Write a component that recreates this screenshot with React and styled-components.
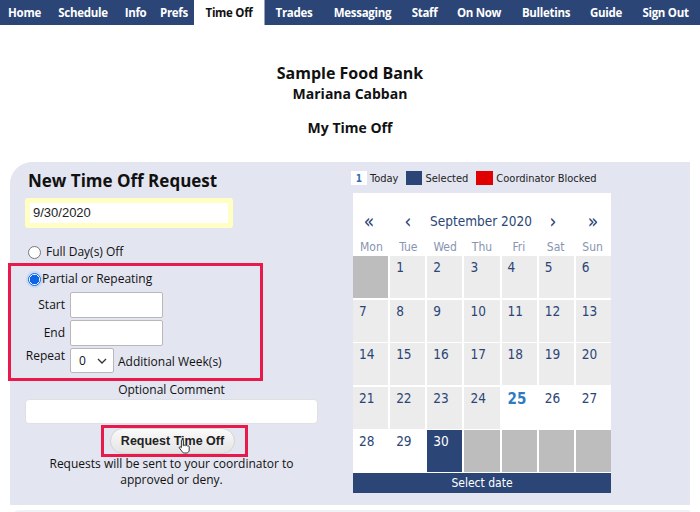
import styled, { createGlobalStyle, css } from "styled-components";

const GlobalStyle = createGlobalStyle`
  html, body { margin: 0; padding: 0; background: #ffffff; }
  body { font-family: "Open Sans", "Noto Sans", sans-serif; color: #111; }
  * { box-sizing: border-box; }
`;

const NAVY = "#2b4577";

// Navigation
const NavBar = styled.nav`
  display: flex;
  height: 25px;
  background: ${NAVY};
`;

const Tab = styled.div`
  width: ${(p) => p.w}px;
  display: flex;
  align-items: center;
  justify-content: center;
  font-size: 11.5px;
  letter-spacing: -0.3px;
  font-weight: 700;
  color: #ffffff;
  ${(p) =>
    p.active &&
    css`
      background: #ffffff;
      color: #111111;
      border-right: 1px solid #9aa3b5;
    `}
`;

// Page heading
const Header = styled.header`
  display: flex;
  flex-direction: column;
  align-items: center;
  padding-top: 38px;
  font-weight: 700;
`;

const Org = styled.div`
  font-size: 16px;
  line-height: 21px;
`;

const Person = styled.div`
  font-size: 14px;
  line-height: 20px;
`;

const PageTitle = styled.div`
  font-size: 14px;
  line-height: 20px;
  margin-top: 14px;
`;

// Main panel
const Panel = styled.section`
  margin: 24px 10px 0 10px;
  height: 343px;
  background: #e3e5f0;
  border-top-left-radius: 22px;
  display: flex;
`;

const FormCol = styled.div`
  width: 331px;
  padding-left: 15px;
  display: flex;
  flex-direction: column;
  font-size: 12px;
`;

const FormTitle = styled.h2`
  margin: 7px 0 0 3px;
  font-size: 17px;
  line-height: 24px;
  font-weight: 700;
`;

const DateBox = styled.div`
  margin-top: 5px;
  width: 208px;
  padding: 5px;
  background: #ffffc4;
  border-radius: 3px;
`;

const DateInput = styled.div`
  height: 20px;
  background: #ffffff;
  font-family: "Liberation Sans", Arial, sans-serif;
  font-size: 13px;
  line-height: 20px;
  padding-left: 3px;
  color: #222;
`;

const RadioRow = styled.label`
  display: flex;
  align-items: center;
  gap: ${(p) => (p.tight ? 1 : 5)}px;
  line-height: 16px;
  margin-top: ${(p) => p.mt || 0}px;
  margin-left: ${(p) => p.ml ?? 3}px;
`;

const Radio = styled.span`
  width: 13px;
  height: 13px;
  border-radius: 50%;
  border: 1px solid #767676;
  background: #ffffff;
  ${(p) =>
    p.checked &&
    css`
      border: 1px solid #0a66e6;
      background: radial-gradient(circle, #0a66e6 0 4.5px, #ffffff 4.6px);
      box-shadow: 0 0 0 2px #c8d8f6;
    `}
`;

const Highlight = styled.div`
  border: 3px solid #e8194b;
  ${(p) =>
    p.form &&
    css`
      margin: 3px 0 0 -17px;
      width: 255px;
      height: 118px;
      padding: 5px 0 0 17px;
    `}
`;

const FieldRow = styled.div`
  display: flex;
  align-items: ${(p) => (p.top ? "flex-start" : "center")};
  margin-top: ${(p) => p.mt || 0}px;
`;

const FieldLabel = styled.span`
  width: 45px;
  text-align: right;
  padding-right: 5px;
  margin-left: -3px;
  line-height: 16px;
`;

const TimeInput = styled.div`
  width: 93px;
  height: 26px;
  background: #ffffff;
  border: 1px solid #b8b8b8;
  border-radius: 2px;
`;

const Select = styled.div`
  width: 44px;
  height: 25px;
  background: #ffffff;
  border: 1px solid #b8b8b8;
  border-radius: 2px;
  display: flex;
  align-items: center;
  justify-content: space-between;
  padding: 0 6px 0 8px;
`;

const SelectNote = styled.span`
  margin-left: 4px;
  margin-top: 6px;
  line-height: 16px;
`;

const CommentLabel = styled.div`
  margin-top: 1px;
  text-align: center;
  width: 293px;
  line-height: 16px;
`;

const CommentInput = styled.div`
  margin-top: 1px;
  width: 293px;
  height: 25px;
  background: #ffffff;
  border: 1px solid #e0e0e0;
  border-radius: 4px;
`;

const ButtonWrap = styled(Highlight)`
  position: relative;
  align-self: flex-start;
  margin: 1px 0 0 76px;
  padding: 0 10px 0 6px;
`;

const SubmitButton = styled.button`
  display: block;
  width: 125px;
  height: 26px;
  border: 1px solid #d5d5d5;
  border-radius: 13px;
  background: linear-gradient(#fafafa, #e4e4e4);
  font-family: "Liberation Sans", Arial, sans-serif;
  font-weight: 700;
  font-size: 12.5px;
  color: #222;
  padding: 0;
`;

const Cursor = styled.svg`
  position: absolute;
  left: 74px;
  top: 10px;
`;

const Note = styled.p`
  margin: -1px 0 0 0;
  width: 293px;
  text-align: center;
  line-height: 16px;
`;

// Calendar column
const CalCol = styled.div`
  padding-left: 10px;
  display: flex;
  flex-direction: column;
  font-family: "DejaVu Sans Condensed", "DejaVu Sans", sans-serif;
`;

const Legend = styled.div`
  display: flex;
  align-items: center;
  margin-top: 9px;
  height: 14px;
  font-size: 11px;
  color: #222;
`;

const Swatch = styled.span`
  width: ${(p) => p.w || 16}px;
  height: 14px;
  background: ${(p) => p.bg};
  color: #2e6fb0;
  font-size: 10px;
  font-weight: 700;
  display: flex;
  align-items: center;
  justify-content: center;
  margin-right: 3px;
  margin-left: ${(p) => p.ml || 0}px;
`;

const Calendar = styled.div`
  margin-top: 8px;
  margin-left: 2px;
  width: 258px;
  background: #ffffff;
  display: flex;
  flex-direction: column;
`;

const MonthNav = styled.div`
  display: grid;
  grid-template-columns: 32px 46px 100px 44px 36px;
  align-items: center;
  margin-top: 17px;
  height: 22px;
  color: #2b4577;
`;

const NavArrow = styled.span`
  text-align: center;
  font-size: 19px;
  line-height: 22px;
`;

const MonthTitle = styled.span`
  display: flex;
  justify-content: center;
  white-space: nowrap;
  font-size: 13.5px;
`;

const Weekdays = styled.div`
  display: grid;
  grid-template-columns: repeat(7, 1fr);
  margin-top: 6px;
  height: 17px;
  align-items: center;
  color: #8894b0;
  font-size: 12px;
  text-align: center;
`;

const DayGrid = styled.div`
  display: grid;
  grid-template-columns: repeat(7, 1fr);
  grid-auto-rows: 42px;
  column-gap: 2px;
  row-gap: 1.5px;
  margin-top: 1px;
`;

const dayStyles = {
  past: css`background: #ececec;`,
  blank: css`background: #bdbdbd;`,
  future: css`background: #ffffff;`,
  today: css`
    background: #ffffff;
    color: #2e7bbf;
    font-weight: 700;
    font-size: 15px;
  `,
  selected: css`
    background: ${NAVY};
    color: #ffffff;
  `,
};

const Day = styled.div`
  padding: 3px 0 0 6px;
  font-size: 13.5px;
  color: #2b4577;
  ${(p) => dayStyles[p.kind]}
`;

const SelectBar = styled.div`
  margin-top: 1px;
  height: 20px;
  background: ${NAVY};
  color: #ffffff;
  font-size: 12px;
  display: flex;
  align-items: center;
  justify-content: center;
`;

const NextPanel = styled.div`
  margin: 5px 10px 0 10px;
  height: 10px;
  background: #f1f2f6;
  border-top-left-radius: 12px;
`;

const tabs = [
  ["Home", 49],
  ["Schedule", 68],
  ["Info", 37],
  ["Prefs", 40],
  ["Time Off", 71],
  ["Trades", 58],
  ["Messaging", 79],
  ["Staff", 45],
  ["On Now", 64],
  ["Bulletins", 70],
  ["Guide", 50],
  ["Sign Out", 69],
];

const days = [{ n: "", kind: "blank" }];
for (let d = 1; d <= 30; d++) {
  let kind = "past";
  if (d === 25) kind = "today";
  else if (d === 30) kind = "selected";
  else if (d > 25) kind = "future";
  days.push({ n: d, kind });
}
for (let i = 0; i < 4; i++) days.push({ n: "", kind: "blank" });

const Chevron = () => (
  <svg width="10" height="6" viewBox="0 0 10 6">
    <path d="M1 1l4 4 4-4" fill="none" stroke="#333" strokeWidth="1.3" />
  </svg>
);

export default function App() {
  return (
    <>
      <GlobalStyle />
      <NavBar>
        {tabs.map(([label, w]) => (
          <Tab key={label} w={w} active={label === "Time Off"}>
            {label}
          </Tab>
        ))}
      </NavBar>

      <Header>
        <Org>Sample Food Bank</Org>
        <Person>Mariana Cabban</Person>
        <PageTitle>My Time Off</PageTitle>
      </Header>

      <Panel>
        <FormCol>
          <FormTitle>New Time Off Request</FormTitle>
          <DateBox>
            <DateInput>9/30/2020</DateInput>
          </DateBox>
          <RadioRow mt={16}>
            <Radio />
            Full Day(s) Off
          </RadioRow>
          <Highlight form>
            <RadioRow tight ml={0}>
              <Radio checked />
              Partial or Repeating
            </RadioRow>
            <FieldRow mt={5}>
              <FieldLabel>Start</FieldLabel>
              <TimeInput />
            </FieldRow>
            <FieldRow mt={2}>
              <FieldLabel>End</FieldLabel>
              <TimeInput />
            </FieldRow>
            <FieldRow mt={2} top>
              <FieldLabel>Repeat</FieldLabel>
              <Select>
                0<Chevron />
              </Select>
              <SelectNote>Additional Week(s)</SelectNote>
            </FieldRow>
          </Highlight>
          <CommentLabel>Optional Comment</CommentLabel>
          <CommentInput />
          <ButtonWrap>
            <SubmitButton>Request Time Off</SubmitButton>
            <Cursor width="14" height="16" viewBox="0 0 14 16">
              <path
                d="M4 1.5c.8 0 1.3.5 1.3 1.3v5l.2-.1c.3-.6 1.7-.6 2 .1.4-.5 1.6-.5 1.9.3.4-.4 1.6-.3 1.8.6V12c0 1.8-1.2 3-3 3H6.5c-1 0-1.7-.4-2.3-1.2L1.4 10c-.5-.7.4-1.6 1.1-1.1l.9.8V2.8c0-.8.3-1.3.6-1.3z"
                fill="#ffffff"
                stroke="#222"
                strokeWidth="0.9"
              />
            </Cursor>
          </ButtonWrap>
          <Note>
            Requests will be sent to your coordinator to
            <br />
            approved or deny.
          </Note>
        </FormCol>

        <CalCol>
          <Legend>
            <Swatch bg="#ffffff">1</Swatch>
            Today
            <Swatch bg={NAVY} ml={8}>
              {" "}
            </Swatch>
            Selected
            <Swatch bg="#e00000" w={17} ml={8}>
              {" "}
            </Swatch>
            Coordinator Blocked
          </Legend>
          <Calendar>
            <MonthNav>
              <NavArrow>«</NavArrow>
              <NavArrow>‹</NavArrow>
              <MonthTitle>September 2020</MonthTitle>
              <NavArrow>›</NavArrow>
              <NavArrow>»</NavArrow>
            </MonthNav>
            <Weekdays>
              {["Mon", "Tue", "Wed", "Thu", "Fri", "Sat", "Sun"].map((d) => (
                <span key={d}>{d}</span>
              ))}
            </Weekdays>
            <DayGrid>
              {days.map((d, i) => (
                <Day key={i} kind={d.kind}>
                  {d.n}
                </Day>
              ))}
            </DayGrid>
            <SelectBar>Select date</SelectBar>
          </Calendar>
        </CalCol>
      </Panel>
      <NextPanel />
    </>
  );
}
